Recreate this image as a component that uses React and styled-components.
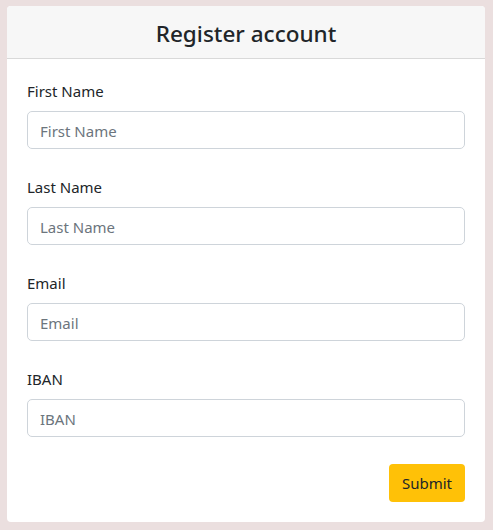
import styled, { createGlobalStyle } from "styled-components";

const GlobalStyle = createGlobalStyle`
  html, body {
    margin: 0;
    background: #ebdfdf;
  }
  body {
    font-family: "Noto Sans", "Open Sans", sans-serif;
    color: #212529;
    padding: 6px 8px 10px 7px;
  }
`;

const Card = styled.div`
  background: #fff;
  border-radius: 4px;
  overflow: hidden;
`;

const Header = styled.div`
  background: #f7f7f7;
  border-bottom: 1px solid #d9d9d9;
  height: 52px;
  display: flex;
  align-items: center;
  justify-content: center;
`;

const Title = styled.h2`
  margin: 0;
  padding-top: 2px;
  font-size: 22.5px;
  font-weight: 500;
  color: #212529;
`;

const Body = styled.form`
  padding: 20px;
  display: flex;
  flex-direction: column;
  gap: 26px;
`;

const Field = styled.div`
  display: flex;
  flex-direction: column;
`;

const Label = styled.label`
  font-size: 15px;
  line-height: 24px;
  margin-bottom: 8px;
`;

const Input = styled.input`
  box-sizing: border-box;
  height: 38px;
  padding: 1px 12px 0;
  border: 1px solid #ced4da;
  border-radius: 5px;
  font-family: inherit;
  font-size: 15px;
  color: #212529;
  &::placeholder {
    color: #6c757d;
  }
`;

const Actions = styled.div`
  display: flex;
  justify-content: flex-end;
  margin-top: 1px;
`;

const Button = styled.button`
  height: 38px;
  width: 76px;
  background: #ffc107;
  border: none;
  border-radius: 4px;
  font-family: inherit;
  font-size: 15px;
  color: #212529;
`;

const fields = ["First Name", "Last Name", "Email", "IBAN"];

const App = () => {
  return (
    <>
      <GlobalStyle />
      <Card>
        <Header>
          <Title>Register account</Title>
        </Header>
        <Body onSubmit={(e) => e.preventDefault()}>
          {fields.map((f) => (
            <Field key={f}>
              <Label>{f}</Label>
              <Input placeholder={f} />
            </Field>
          ))}
          <Actions>
            <Button type="submit">Submit</Button>
          </Actions>
        </Body>
      </Card>
    </>
  );
};

export default App;
